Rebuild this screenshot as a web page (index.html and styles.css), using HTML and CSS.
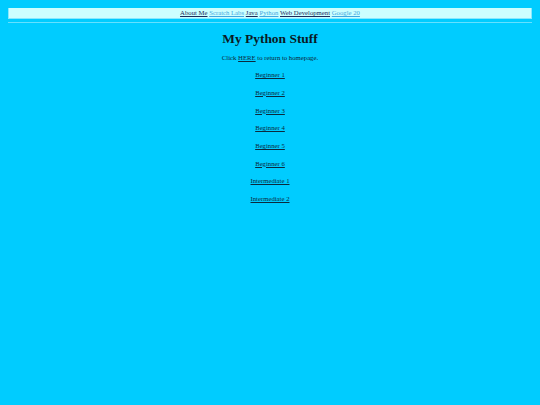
FILE: index.html
```html
<!DOCTYPE html>
<html>
<head>
<meta charset="utf-8">
<link rel="stylesheet" href="styles.css">
</head>
<body>
<div class="nav">
<a class="dark" href="#">About Me</a>
<a class="light" href="#">Scratch Labs</a>
<a class="dark" href="#">Java</a>
<a class="light" href="#">Python</a>
<a class="dark" href="#">Web Development</a>
<a class="light" href="#">Google 20</a>
</div>
<div class="rule"></div>
<h1 class="title">My Python Stuff</h1>
<p class="item">Click <a class="link" href="#">HERE</a> to return to homepage.</p>
<p class="item"><a class="link" href="#">Beginner 1</a></p>
<p class="item"><a class="link" href="#">Beginner 2</a></p>
<p class="item"><a class="link" href="#">Beginner 3</a></p>
<p class="item"><a class="link" href="#">Beginner 4</a></p>
<p class="item"><a class="link" href="#">Beginner 5</a></p>
<p class="item"><a class="link" href="#">Beginner 6</a></p>
<p class="item"><a class="link" href="#">Intermediate 1</a></p>
<p class="item"><a class="link" href="#">Intermediate 2</a></p>
</body>
</html>
```
FILE: styles.css
```css
html, body {
  background: #00ccff;
}
body {
  margin: 8px;
  font-family: "Liberation Serif", serif;
  font-size: 6.72px;
  color: #0c2434;
}
.nav {
  background: #ccffff;
  border: 1px solid #88e8ff;
  text-align: center;
  height: 10px;
  line-height: 10px;
  margin-top: -1px;
}
.nav a {
  text-decoration: underline;
}
.nav .dark {
  color: #1a2a5a;
}
.nav .light {
  color: #3fa6e0;
}
.rule {
  height: 1px;
  background: #66e0ff;
  margin-top: 3px;
}
.title {
  font-size: 13.44px;
  font-weight: bold;
  text-align: center;
  margin: 7.5px 0 0;
  line-height: 16px;
  color: #0a1a24;
}
.item {
  text-align: center;
  margin: 0;
  line-height: 17.71px;
}
.item:first-of-type {
  margin-top: 2px;
}
.link {
  color: #0b2a3e;
  text-decoration: underline;
}
```
